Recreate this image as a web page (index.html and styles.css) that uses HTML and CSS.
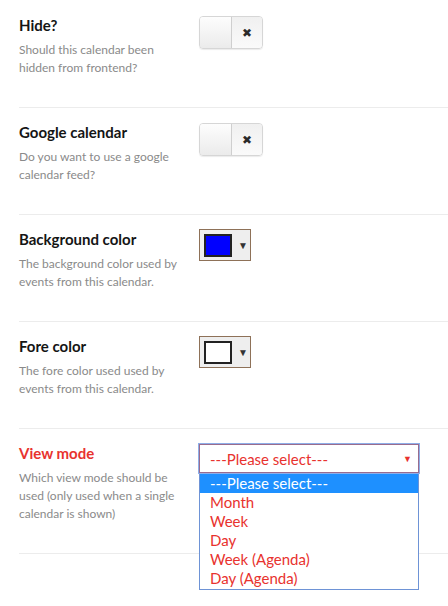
FILE: index.html
```html
<!DOCTYPE html>
<html>
<head>
<meta charset="utf-8">
<link rel="stylesheet" href="styles.css">
</head>
<body>
<div class="form">
  <div class="row">
    <div class="info">
      <div class="title">Hide?</div>
      <div class="desc">Should this calendar been hidden from frontend?</div>
    </div>
    <div class="control">
      <div class="switch"><span class="knob"></span><span class="off">&#10006;</span></div>
    </div>
  </div>
  <div class="row">
    <div class="info">
      <div class="title">Google calendar</div>
      <div class="desc">Do you want to use a google calendar feed?</div>
    </div>
    <div class="control">
      <div class="switch"><span class="knob"></span><span class="off">&#10006;</span></div>
    </div>
  </div>
  <div class="row">
    <div class="info">
      <div class="title">Background color</div>
      <div class="desc">The background color used by events from this calendar.</div>
    </div>
    <div class="control">
      <div class="picker"><span class="swatch blue"></span><span class="caret">&#9660;</span></div>
    </div>
  </div>
  <div class="row">
    <div class="info">
      <div class="title">Fore color</div>
      <div class="desc">The fore color used used by events from this calendar.</div>
    </div>
    <div class="control">
      <div class="picker"><span class="swatch white"></span><span class="caret">&#9660;</span></div>
    </div>
  </div>
  <div class="row">
    <div class="info">
      <div class="title error">View mode</div>
      <div class="desc">Which view mode should be used (only used when a single calendar is shown)</div>
    </div>
    <div class="control">
      <div class="select-wrap">
        <div class="select"><span>---Please select---</span><span class="sel-caret">&#9660;</span></div>
        <ul class="options">
          <li class="active">---Please select---</li>
          <li>Month</li>
          <li>Week</li>
          <li>Day</li>
          <li>Week (Agenda)</li>
          <li>Day (Agenda)</li>
        </ul>
      </div>
    </div>
  </div>
</div>
</body>
</html>
```
FILE: styles.css
```css
html, body {
  margin: 0;
  padding: 0;
  background: #fff;
}
body {
  font-family: Lato, "Open Sans", sans-serif;
  width: 448px;
  height: 606px;
  overflow: hidden;
}
.form {
  padding: 1px 0 0 19px;
}
.row {
  display: grid;
  grid-template-columns: 165px 1fr;
  column-gap: 15px;
  padding: 14px 0 0 0;
  height: 92px;
  border-bottom: 1px solid #ececec;
}
.row:last-child {
  height: 110px;
}
.title {
  font-size: 15px;
  font-weight: 700;
  line-height: 20px;
  color: #151515;
}
.title.error {
  color: #e8322e;
}
.desc {
  margin-top: 6px;
  font-size: 12px;
  line-height: 18px;
  color: #8a8a8a;
}
.control {
  padding-top: 1px;
}
.switch {
  display: flex;
  width: 62px;
  height: 31px;
  border: 1px solid #d6d6d6;
  border-radius: 4px;
  overflow: hidden;
  box-shadow: 0 1px 1px rgba(0,0,0,0.08);
  background: linear-gradient(#fafafa, #ececec);
}
.knob {
  width: 31px;
  border-right: 1px solid #cfcfcf;
  background: linear-gradient(#fdfdfd, #ebebeb);
}
.off {
  flex: 1;
  display: flex;
  align-items: center;
  justify-content: center;
  font-size: 12px;
  color: #2a2a2a;
  background: linear-gradient(#f0f0f0, #fafafa);
}
.picker {
  display: flex;
  align-items: center;
  width: 50px;
  height: 30px;
  margin-top: -1px;
  border: 1px solid #8e7158;
  background: #eeeeee;
}
.swatch {
  width: 24px;
  height: 19px;
  margin-left: 4px;
  border: 2px solid #222;
}
.swatch.blue { background: #0000ff; }
.swatch.white { background: #ffffff; }
.caret {
  margin-left: 6px;
  font-size: 10px;
  color: #333;
}
.select-wrap {
  position: relative;
  width: 220px;
}
.select {
  display: flex;
  align-items: center;
  justify-content: space-between;
  height: 27px;
  padding: 0 6px 0 10px;
  border: 1px solid #9a6c8e;
  outline: 1px solid #8eaee8;
  font-size: 15px;
  color: #e8322e;
  background: #fff;
}
.sel-caret {
  font-size: 9px;
  color: #e8322e;
}
.options {
  position: absolute;
  left: 0;
  top: 30px;
  width: 218px;
  margin: 0;
  padding: 0 0 1px 0;
  list-style: none;
  border: 1px solid #6e93d6;
  border-top: none;
  background: #fff;
}
.options li {
  height: 19px;
  line-height: 19px;
  padding-left: 10px;
  font-size: 15px;
  color: #e8322e;
}
.options li.active {
  background: #1e90ff;
  color: #fff;
}
```
